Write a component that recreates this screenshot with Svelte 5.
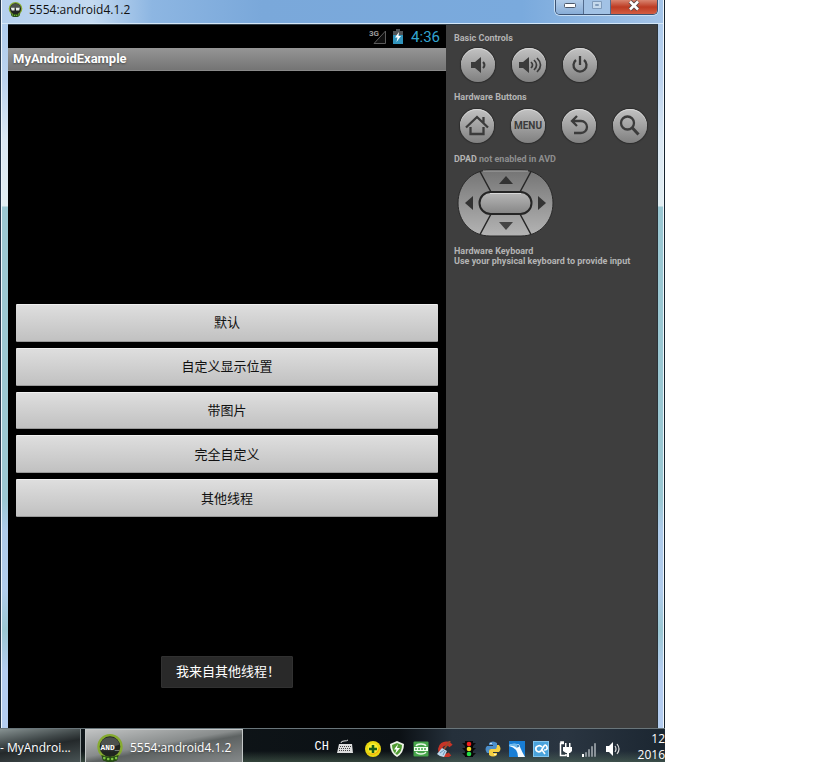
<script>
  const items = ['默认', '自定义显示位置', '带图片', '完全自定义', '其他线程'];
  let toast = $state('我来自其他线程！');
</script>

{#snippet android(label)}
  <svg viewBox="0 0 32 32" aria-hidden="true">
    <path d="M6 22h20l-2 8q-8 4-16 0z" fill="#263f14" />
    <circle cx="16" cy="14.500" r="14.500" fill="#86ab30" />
    <circle cx="16" cy="14.500" r="11.800" fill="#202420" />
    <path d="M5 12a11.500 11.500 0 0 1 22 0q-11 5-22 0z" fill="#4d514d" />
    <path d="M6 24q10 4 20 0l-2 6q-8 4-16 0z" fill="#264d15" />
    <g fill="#7fc441"><circle cx="9.500" cy="27.500" r="1.500" /><circle cx="14" cy="28.500" r="1.500" /><circle cx="18.500" cy="28.500" r="1.500" /><circle cx="23" cy="27.500" r="1.500" /></g>
    {#if label}
      <text x="16" y="18" text-anchor="middle" fill="#fff" font-size="9" font-weight="700" font-family="Liberation Mono, monospace">AND_</text>
    {:else}
      <path d="M6 12h8v6H8zM17 12h8l-1 6h-7z" fill="#e9eee9" />
    {/if}
  </svg>
{/snippet}

<main>
  <section class="window">
    <header>
      <span class="app-icon">{@render android(false)}</span>
      <h1>5554:android4.1.2</h1>
      <div class="caption">
        <button aria-label="Minimize"><svg width="14" height="8" viewBox="0 0 14 8"><rect x="1.500" y="2.500" width="11" height="4" rx="1" fill="#fff" stroke="#4c586a" /></svg></button>
        <button class="max" aria-label="Maximize"><svg width="12" height="10" viewBox="0 0 12 10"><path d="M1.500 1.500h9v7h-9zM4.500 4.500h3v1h-3z" fill="#c5d9ec" stroke="#7f9bbb" /></svg></button>
        <button class="close" aria-label="Close"><svg width="14" height="11" viewBox="0 0 14 11"><path d="M3 1.500l8 8M11 1.500l-8 8" stroke="#5b4545" stroke-width="4.500" /><path d="M3 1.500l8 8M11 1.500l-8 8" stroke="#fff" stroke-width="2.600" /></svg></button>
      </div>
    </header>

    <div class="body">
      <div class="phone">
        <div class="status">
          <svg width="18" height="16" viewBox="0 0 18 16" aria-hidden="true"><path d="M5 14.500L16.500 2v12.500z" fill="#101010" stroke="#5c5c5c" /><text x="0" y="7" font-size="8" font-weight="700" fill="#9b9b9b" font-family="Roboto, sans-serif">3G</text></svg>
          <svg width="10" height="15" viewBox="0 0 10 15" aria-hidden="true"><path d="M3 0h4v2h3v13H0V2h3z" fill="#4f5356" /><path d="M0 6h10v9H0z" fill="#3093bb" /><path d="M6 3L2 8.500h2.500L3.500 13 8 7H5.500z" fill="#fff" /></svg>
          <time>4:36</time>
        </div>
        <h2>MyAndroidExample</h2>
        <div class="screen">
          <div class="list">
            {#each items as item}
              <button>{item}</button>
            {/each}
          </div>
          <div class="toast" role="status">{toast}</div>
        </div>
      </div>

      <aside>
        <h3>Basic Controls</h3>
        <div class="keys">
          <button aria-label="Volume down"><svg viewBox="0 0 34 34"><path d="M10 14h4l6-5v16l-6-5h-4z" fill="#3b3b3b" /><path d="M22 14q3 3 0 6" fill="none" stroke="#3b3b3b" stroke-width="2" /></svg></button>
          <button aria-label="Volume up"><svg viewBox="0 0 34 34"><path d="M7 14h4l6-5v16l-6-5H7z" fill="#3b3b3b" /><path d="M19 14q3 3 0 6M22 12q5 5 0 10M25 10q7 7 0 14" fill="none" stroke="#3b3b3b" stroke-width="1.700" /></svg></button>
          <button aria-label="Power"><svg viewBox="0 0 34 34"><path d="M13 12a6.500 6.500 0 1 0 8 0M17 8v9" fill="none" stroke="#3b3b3b" stroke-width="2.300" /></svg></button>
        </div>
        <h3>Hardware Buttons</h3>
        <div class="keys hardware">
          <button aria-label="Home"><svg viewBox="0 0 34 34"><path d="M6 18.500L17 8l11 10.500M23.500 8v6M10.500 18v7h13v-7" fill="none" stroke="#3b3b3b" stroke-width="2.300" /></svg></button>
          <button class="menu">MENU</button>
          <button aria-label="Back"><svg viewBox="0 0 34 34"><path d="M15 7l-5 5 5 5M10 12h9a6 6 0 0 1 0 12h-7" fill="none" stroke="#3b3b3b" stroke-width="2.300" /></svg></button>
          <button aria-label="Search"><svg viewBox="0 0 34 34"><circle cx="14.500" cy="14" r="6.500" fill="none" stroke="#3b3b3b" stroke-width="2.300" /><path d="M19 18.500l6.500 7" stroke="#3b3b3b" stroke-width="3" /></svg></button>
        </div>
        <h3>DPAD <span>not enabled in AVD</span></h3>
        <div class="dpad">
          <svg class="pad" viewBox="0 0 97 68" aria-hidden="true">
            <defs>
              <linearGradient id="pad" x2="0" y2="1"><stop offset="0" stop-color="#747474" /><stop offset="1" stop-color="#b4b4b4" /></linearGradient>
              <linearGradient id="ok" x2="0" y2="1"><stop offset="0" stop-color="#b9b9b9" /><stop offset="1" stop-color="#858585" /></linearGradient>
            </defs>
            <path d="M33 1h31C83 1 96 16 96 34S83 67 64 67H33C14 67 1 52 1 34S14 1 33 1z" fill="url(#pad)" stroke="#292929" />
            <path d="M23 2.500L34 23M74 2.500L63 23M34 45L23 65.500M63 45l11 20.500" fill="none" stroke="#262626" stroke-width="1.500" />
            <path d="M26 2h45" stroke="#a5a5a5" />
            <rect x="22.500" y="23" width="52" height="22" rx="11" fill="url(#ok)" stroke="#252525" stroke-width="2" />
            <path d="M33 24.500h31" stroke="#d8d8d8" />
          </svg>
          <button class="up" aria-label="Up" disabled><svg width="14" height="8" viewBox="0 0 14 8"><path d="M7 0l7 8H0z" fill="#333" /></svg></button>
          <button class="left" aria-label="Left" disabled><svg width="8" height="14" viewBox="0 0 8 14"><path d="M8 0v14L0 7z" fill="#333" /></svg></button>
          <button class="mid" aria-label="Select" disabled></button>
          <button class="right" aria-label="Right" disabled><svg width="8" height="14" viewBox="0 0 8 14"><path d="M0 0v14l8-7z" fill="#333" /></svg></button>
          <button class="down" aria-label="Down" disabled><svg width="14" height="8" viewBox="0 0 14 8"><path d="M7 8l7-8H0z" fill="#444" /></svg></button>
        </div>
        <h3>Hardware Keyboard</h3>
        <p>Use your physical keyboard to provide input</p>
      </aside>
    </div>
  </section>

  <footer>
    <button class="task first">- MyAndroi...</button>
    <button class="task active"><span class="task-icon">{@render android(true)}</span>5554:android4.1.2</button>
    <div class="tray">
      <span class="lang">CH</span>
      <svg class="keyboard" viewBox="0 0 16 16"><path d="M4 4q0-2 3-2t4-1" fill="none" stroke="#ddd" /><path d="M2 5h13l1 9H0z" fill="#ddd" /><path d="M3 7.500h11M2 9.500h12M2 11.500h12" stroke="#444" stroke-dasharray="1 1" /></svg>
      <svg viewBox="0 0 16 16"><circle cx="8" cy="8" r="8" fill="#e9d911" /><path d="M1 11q7 5 14-5a8 8 0 0 1-14 5z" fill="#f6a70e" /><circle cx="8" cy="7.500" r="5" fill="#f5ef35" /><path d="M8 4v8M4 8h8" stroke="#175c17" stroke-width="2.500" /></svg>
      <svg viewBox="0 0 16 16"><path d="M8 0l7 3q0 9-7 13Q1 12 1 3z" fill="#eef4e8" /><path d="M8 2l5 2q0 7-5 10-5-3-5-10z" fill="#509b32" /><path d="M9 3L5 8.500h2.500L6 13l5-6H8z" fill="#fff" /></svg>
      <svg viewBox="0 0 16 16"><rect x=".5" y=".5" width="15" height="15" rx="1" fill="#46a54a" /><path d="M3 5q1-2 5-2t5 2M3 11q1 2 5 2t5-2" fill="none" stroke="#e7f5e5" stroke-width="1.300" /><path d="M1 6h14v4H1z" fill="#f3fff0" /><path d="M2 8h12" stroke="#46a54a" stroke-width="1.500" stroke-dasharray="2 1" /></svg>
      <svg viewBox="0 0 16 16"><path d="M14 5A6 6 0 1 0 13 13" fill="none" stroke="#c83427" stroke-width="4" /><path d="M13 0L7 8" stroke="#a3482b" stroke-width="2" /><path d="M5 7l5 3-3 6q-4 0-7-3z" fill="#bdd7ec" /><path d="M3 12l4-3M6 14l2-4" stroke="#6a93b7" /></svg>
      <svg viewBox="0 0 16 16"><path d="M4 0h8v16H4zM1 2h14l-3 3H4zM1 7h14l-3 3H4zM1 12h14l-3 3H4z" fill="#080808" /><circle cx="8" cy="3" r="2.300" fill="#f22020" /><circle cx="8" cy="8" r="2.300" fill="#f4dc28" /><circle cx="8" cy="13" r="2.300" fill="#25dc49" /></svg>
      <svg viewBox="0 0 16 16"><path d="M4 2q4-3 8 0v5q0 1-2 1H6q-2 0-2 4H2q-3-4 0-7h6V4H4z" fill="#4c8fca" /><path d="M12 14q-4 3-8 0v-4q0-2 2-2h4q2 0 2-4h2q3 4 0 7H8v1h4z" fill="#f3ce42" /><circle cx="6" cy="2.500" r=".8" fill="#fff" /><circle cx="10" cy="13.500" r=".8" fill="#fff" /></svg>
      <svg viewBox="0 0 16 16"><rect width="16" height="16" fill="#187ed5" /><path d="M0 4q4-2 8-1 3 0 3 3 2 5 5 10H9Q9 7 0 5z" fill="#f4faff" /><path d="M0 4q4-2 8-1l3 2-3 2q-4-3-8-2z" fill="#6db9ed" /><circle cx="9" cy="5" r=".8" fill="#113c76" /></svg>
      <svg viewBox="0 0 16 16"><rect x=".5" y=".5" width="15" height="15" fill="#4aa3dc" stroke="#7fc4ee" /><path d="M9 6q-2-2-4-1-3 1-2 4 2 3 5 1l3-5q2-2 3 1t-3 3" fill="none" stroke="#fff" stroke-width="1.700" /><path d="M9 9l3 4" stroke="#fff" stroke-width="1.500" /></svg>
      <svg viewBox="0 0 16 16"><path d="M7 2.500H3.500v12H9V13M4 2V1h3" fill="none" stroke="#fff" stroke-width="1.500" /><path d="M6 6h9v4l-2 2H9l-3-2zM8 2h1.500v4H8zM12 2h1.500v4H12zM10 12h2v4h-2z" fill="#fff" /></svg>
      <svg viewBox="0 0 16 16"><path d="M1 13h2v3H1z" fill="#fff" /><path d="M4.500 11.500h1v4h-1zM7.500 8.500h1v7h-1zM10.500 5.500h1v10h-1zM13.500 2.500h1v13h-1z" fill="#4e575f" stroke="#8a9299" /></svg>
      <svg viewBox="0 0 16 16"><path d="M1 5h3l4-4v14l-4-4H1z" fill="#fff" /><path d="M10 5q2 3 0 6M12 3q4 5 0 10" fill="none" stroke="#ddd" stroke-width="1.200" /></svg>
    </div>
    <div class="clock"><time>12</time><time>2016</time></div>
  </footer>
</main>

<style>
  :global(body) { margin: 0; background: #fff; }
  * { box-sizing: border-box; }
  h1, h2, h3, p { margin: 0; }
  button { font: inherit; color: inherit; border: 0; padding: 0; background: none; }
  svg { display: block; flex: none; }
  main {
    display: flex; flex-direction: column; min-height: 100vh; margin-right: 154px;
    font-family: 'Open Sans', 'Noto Sans', sans-serif;
  }
  .window {
    flex: 1; display: flex; flex-direction: column; padding: 0 6px 0 7px;
    border-right: 1px solid #17242e; border-left: 1px solid #26384c;
    background: linear-gradient(#a9c9ec 0, #bcd3ee 80px, #dbe8f3 140px, #e2eef2 206px, #9bc8d3 207px, #9bc8d3 500px, #aecbea 530px, #b1ccec 590px, #9bc8d3 630px, #b4cdf0 670px);
    box-shadow: inset 1px 0 #eff6fc, inset -1px 0 #eff6fc;
  }
  header {
    display: flex; align-items: flex-start; height: 24px; margin: 0 -5px 0 -6px; padding-left: 6px;
    background: linear-gradient(90deg, #b5d0ed, #c4daf1 90px, #8db6e2 150px, #7aa8da 260px, #7aaadd 520px, #a4c4e8);
    border-bottom: 1px solid #d5e7f7;
  }
  .app-icon { width: 15px; height: 17px; padding-top: 2px; }
  h1 { flex: 1; padding-left: 6px; font-size: 12px; line-height: 20px; font-weight: 400; color: #111; }
  .caption { display: flex; height: 15px; margin-right: 5px; border: 1px solid #3c5272; border-top: 0; border-radius: 0 0 5px 5px; overflow: hidden; box-shadow: 0 0 0 1px #c8dff4; }
  .caption button { display: flex; align-items: center; justify-content: center; width: 28px; padding-bottom: 4px; background: linear-gradient(#b2cce9, #88add7); border-right: 1px solid #536b8d; }
  .caption .max { width: 27px; background: #a2c2e5; }
  .caption .close { width: 46px; border: 0; background: linear-gradient(#d98570, #bd3b23 50%, #d35d42); }
  .body { flex: 1; display: flex; border-top: 1px solid #303e49; }
  .phone { flex: 1; display: flex; flex-direction: column; background: #000; font-family: Roboto, 'Noto Sans CJK SC', sans-serif; }
  .status { display: flex; justify-content: flex-end; align-items: center; height: 23px; padding-right: 6px; gap: 6px; }
  .status time { padding-left: 2px; font-size: 15px; line-height: 24px; color: #33a5cf; }
  h2 { height: 23px; padding-left: 5px; background: linear-gradient(#959595, #747474); border-bottom: 1px solid #8a8a8a; font-size: 13px; line-height: 22px; font-weight: 700; color: #fff; text-shadow: 0 1px 2px #444; }
  .screen { position: relative; flex: 1; display: flex; flex-direction: column; justify-content: center; padding: 22px 8px 0; }
  .list { display: grid; grid-auto-rows: 1fr; gap: 6px; height: 213px; }
  .list button { padding-bottom: 2px; background: linear-gradient(#dedede, #c1c1c1); border-top: 1px solid #f0f0f0; border-bottom: 1px solid #999; border-radius: 1px; font-size: 13px; color: #111; }
  .toast { position: absolute; bottom: 40px; left: 50%; transform: translateX(-50%); padding: 0 14px; background: #292929; border: 1px solid #313131; border-radius: 1px; font-size: 13px; line-height: 30px; color: #fff; white-space: nowrap; width: 132px; }
  aside { flex: 0 0 212px; padding: 8px 0 0 8px; background: #3e3e3e; border-right: 1px solid #2c3439; font-family: Roboto, sans-serif; font-size: 9px; line-height: 10px; font-weight: 700; color: #b4b4b4; }
  h3 { font-size: 9px; line-height: 10px; color: #b4b4b4; }
  h3 span { color: #8e8e8e; }
  .keys { display: flex; gap: 17px; padding: 5px 0 10px 7px; }
  .hardware { padding: 7px 0 11px 6px; }
  .keys button { width: 34px; height: 34px; border-radius: 50%; background: linear-gradient(#c2c2c2, #808080); box-shadow: 0 0 1px 1px #2c2c2c, inset 0 1px #d6d6d6; }
  .keys .menu { font-size: 10px; font-weight: 700; color: #3b3b3b; text-align: center; }
  .dpad { position: relative; display: grid; grid-template: 22px 24px 22px / 24px 49px 24px; width: 97px; margin: 5px 0 9px 3px; }
  .pad { position: absolute; inset: 0; width: 97px; height: 68px; }
  .dpad button { position: relative; display: flex; align-items: center; justify-content: center; }
  .up, .down { grid-column: 2; }
  .left { grid-area: 2 / 1; }
  .mid { grid-area: 2 / 2; }
  .right { grid-area: 2 / 3; }
  footer {
    display: flex; height: 34px; border-top: 1px solid #69757a; font-size: 12px; color: #fff;
    background: linear-gradient(#0000 22px, #56705c88), linear-gradient(90deg, #11191c 0, #0b1014 60%, #25303b 68%, #2a3541 85%, #1b2631);
  }
  .task { display: flex; align-items: center; height: 33px; padding-top: 3px; color: #fff; white-space: nowrap; }
  .first { width: 81px; border-right: 1px solid #929b9c; background: linear-gradient(170deg, #879292, #41494a 35%, #24292b 52%, #485354); }
  .active { width: 158px; margin-left: 4px; padding-left: 10px; gap: 6px; border: 1px solid #c4c8c8; border-bottom: 0; background: linear-gradient(170deg, #c1c3c3, #888c8c 45%, #5d6262 55%, #85898a); text-shadow: 0 1px 2px #444; }
  .task-icon { width: 28px; height: 28px; }
  .tray { flex: 1; display: flex; align-items: center; justify-content: flex-end; gap: 8px; padding-top: 6px; }
  .tray svg { width: 16px; height: 16px; }
  .tray .keyboard { margin-right: 4px; margin-bottom: 4px; }
  .lang { margin-bottom: 4px; font: 12px/16px 'Liberation Mono', monospace; }
  .clock { display: flex; flex-direction: column; width: 44px; padding-top: 2px; text-align: right; line-height: 16px; }
</style>
